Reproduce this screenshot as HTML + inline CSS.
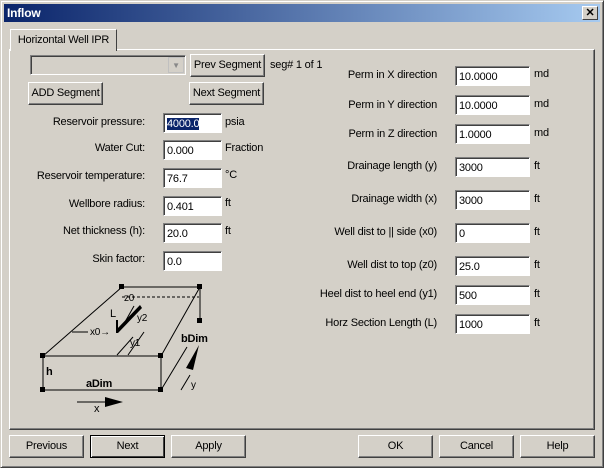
<!DOCTYPE html>
<html><head><style>
*{margin:0;padding:0;box-sizing:border-box;white-space:nowrap}
body{width:604px;height:468px;background:#d4d0c8;font-family:"Liberation Sans",sans-serif;font-size:11px;color:#000;position:relative;overflow:hidden;letter-spacing:-0.2px}
.a{position:absolute}
.win{position:absolute;left:0;top:0;width:604px;height:468px;border:1px solid;border-color:#d4d0c8 #404040 #404040 #d4d0c8;box-shadow:inset 1px 1px 0 #fff,inset -1px -1px 0 #808080}
.title{position:absolute;left:4px;top:4px;width:596px;height:18px;background:linear-gradient(90deg,#0a246a,#a6caf0);color:#fff;font-weight:bold;font-size:12px;line-height:18px;padding-left:3px}
.x{position:absolute;right:2px;top:2px;width:16px;height:14px;background:#d4d0c8;border:1px solid;border-color:#fff #404040 #404040 #fff;color:#000;font-size:11px;line-height:12px;text-align:center}
.btn{position:absolute;height:23px;border:1px solid;border-color:#fff #404040 #404040 #fff;box-shadow:inset -1px -1px 0 #808080;text-align:center;line-height:21px;background:#d4d0c8;overflow:hidden}
.inp{position:absolute;height:20px;background:#fff;border:1px solid;border-color:#808080 #fff #fff #808080;box-shadow:inset 1px 1px 0 #404040;padding:3px 0 0 3px;line-height:14px}
.lab{position:absolute;text-align:right;line-height:14px}
.u{position:absolute;line-height:14px}
</style></head><body>
<div class="win"></div>
<div class="title">Inflow<div class="x">✕</div></div>
<div class="a" style="left:9px;top:49px;width:586px;height:381px;border:1px solid;border-color:#fff #404040 #404040 #fff;box-shadow:inset -1px -1px 0 #808080"></div>
<div class="a" style="left:10px;top:29px;width:107px;height:22px;background:#d4d0c8;border:1px solid;border-bottom:none;border-color:#fff #404040 #404040 #fff;text-align:center;line-height:20px;font-size:11px">Horizontal Well IPR</div>

<div class="inp" style="left:30px;top:55px;width:156px;height:20px;background:#d4d0c8"></div>
<div class="a" style="left:168px;top:57px;width:16px;height:16px;border:1px solid #c0c0c0;color:#888;font-size:8px;text-align:center;line-height:15px">▼</div>
<div class="btn" style="left:190px;top:54px;width:75px">Prev Segment</div>
<div class="u" style="left:270px;top:58px">seg# 1 of 1</div>
<div class="btn" style="left:28px;top:82px;width:75px">ADD Segment</div>
<div class="btn" style="left:189px;top:82px;width:75px">Next Segment</div>

<div class="lab" style="right:459px;top:115px">Reservoir pressure:</div>
<div class="inp" style="left:163px;top:113px;width:59px"><span style="background:#0a246a;color:#fff">4000.0</span></div>
<div class="u" style="left:225px;top:115px">psia</div>
<div class="lab" style="right:459px;top:141px">Water Cut:</div>
<div class="inp" style="left:163px;top:140px;width:59px">0.000</div>
<div class="u" style="left:225px;top:141px">Fraction</div>
<div class="lab" style="right:459px;top:169px">Reservoir temperature:</div>
<div class="inp" style="left:163px;top:168px;width:59px">76.7</div>
<div class="u" style="left:225px;top:168px">°C</div>
<div class="lab" style="right:459px;top:197px">Wellbore radius:</div>
<div class="inp" style="left:163px;top:196px;width:59px">0.401</div>
<div class="u" style="left:225px;top:196px">ft</div>
<div class="lab" style="right:459px;top:224px">Net thickness (h):</div>
<div class="inp" style="left:163px;top:223px;width:59px">20.0</div>
<div class="u" style="left:225px;top:224px">ft</div>
<div class="lab" style="right:459px;top:252px">Skin factor:</div>
<div class="inp" style="left:163px;top:251px;width:59px">0.0</div>

<div class="lab" style="right:167px;top:68px">Perm in X direction</div>
<div class="inp" style="left:455px;top:66px;width:75px">10.0000</div><div class="u" style="left:534px;top:67px">md</div>
<div class="lab" style="right:167px;top:98px">Perm in Y direction</div>
<div class="inp" style="left:455px;top:95px;width:75px">10.0000</div><div class="u" style="left:534px;top:97px">md</div>
<div class="lab" style="right:167px;top:127px">Perm in Z direction</div>
<div class="inp" style="left:455px;top:124px;width:75px">1.0000</div><div class="u" style="left:534px;top:126px">md</div>
<div class="lab" style="right:167px;top:159px">Drainage length (y)</div>
<div class="inp" style="left:455px;top:157px;width:75px">3000</div><div class="u" style="left:534px;top:159px">ft</div>
<div class="lab" style="right:167px;top:192px">Drainage width (x)</div>
<div class="inp" style="left:455px;top:190px;width:75px">3000</div><div class="u" style="left:534px;top:192px">ft</div>
<div class="lab" style="right:167px;top:225px">Well dist to || side (x0)</div>
<div class="inp" style="left:455px;top:223px;width:75px">0</div><div class="u" style="left:534px;top:225px">ft</div>
<div class="lab" style="right:167px;top:258px">Well dist to top (z0)</div>
<div class="inp" style="left:455px;top:256px;width:75px">25.0</div><div class="u" style="left:534px;top:258px">ft</div>
<div class="lab" style="right:167px;top:287px">Heel dist to heel end (y1)</div>
<div class="inp" style="left:455px;top:285px;width:75px">500</div><div class="u" style="left:534px;top:287px">ft</div>
<div class="lab" style="right:167px;top:316px">Horz Section Length (L)</div>
<div class="inp" style="left:455px;top:314px;width:75px">1000</div><div class="u" style="left:534px;top:316px">ft</div>

<svg class="a" style="left:0;top:0" width="604" height="468" font-family="Liberation Sans,sans-serif" font-size="11">
<g stroke="#000" fill="none" stroke-width="1">
<path d="M122 287H200M43 356H161M43 390H161M43 356V390M161 356V390M43 356L122 287M161 356L200 287M200 287V321M161 390L187 347M72 332H88"/>
<path d="M122 297H199" stroke-dasharray="3,2"/>
<path d="M117 355L133 337M128 355L144 332M121 329L134 306M181 390L190 375M77 402H105"/>
</g>
<path d="M116 330L140 305L142 308L118 333Z" fill="#000"/>
<path d="M117 320V333" stroke="#000" stroke-width="2"/>
<path d="M105 397L123 402L105 407Z" fill="#000"/>
<path d="M186 368L199 345L193 370Z" fill="#000"/>
<g fill="#000"><rect x="119" y="284" width="5" height="5"/><rect x="197" y="284" width="5" height="5"/><rect x="40" y="353" width="5" height="5"/><rect x="158" y="353" width="5" height="5"/><rect x="40" y="387" width="5" height="5"/><rect x="158" y="387" width="5" height="5"/><rect x="197" y="318" width="5" height="5"/></g>
<text x="124" y="301" font-size="10">z0</text>
<text x="110" y="317" font-size="11">L</text>
<text x="137" y="321" font-size="10">y2</text>
<text x="90" y="335" font-size="10">x0→</text>
<text x="130" y="346" font-size="10">y1</text>
<text x="181" y="342" font-weight="bold" font-size="11">bDim</text>
<text x="46" y="375" font-weight="bold" font-size="11">h</text>
<text x="86" y="387" font-weight="bold" font-size="11">aDim</text>
<text x="94" y="412">x</text>
<text x="191" y="388" font-size="10">y</text>
</svg>

<div class="btn" style="left:9px;top:435px;width:75px">Previous</div>
<div class="btn" style="left:90px;top:435px;width:75px;border:1px solid #000;box-shadow:inset 1px 1px 0 #fff,inset -1px -1px 0 #404040">Next</div>
<div class="btn" style="left:171px;top:435px;width:75px">Apply</div>
<div class="btn" style="left:358px;top:435px;width:75px">OK</div>
<div class="btn" style="left:439px;top:435px;width:75px">Cancel</div>
<div class="btn" style="left:520px;top:435px;width:75px">Help</div>
</body></html>
